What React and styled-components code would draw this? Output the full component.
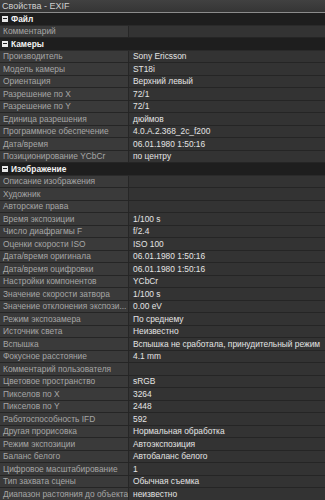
import React from "react";
import styled, { createGlobalStyle } from "styled-components";

const GlobalStyle = createGlobalStyle`
  html, body {
    margin: 0;
    padding: 0;
    background: #2c2c2c;
  }
  body {
    font-family: "Liberation Sans", Arial, sans-serif;
    font-size: 8.4px;
  }
`;

const Panel = styled.div`
  width: 325px;
  height: 500px;
  overflow: hidden;
  background: #2c2c2c;
  display: flex;
  flex-direction: column;
`;

const TitleBar = styled.div`
  height: 13px;
  box-sizing: border-box;
  padding: 0 2px;
  display: flex;
  align-items: center;
  color: #cfcfcf;
  font-size: 9px;
  background: linear-gradient(#414141, #353535);
  border-bottom: 1px solid #8c8c8c;
  flex-shrink: 0;
`;

const Group = styled.div`
  height: 12.5px;
  box-sizing: border-box;
  display: flex;
  align-items: center;
  gap: 3px;
  padding-left: 2px;
  background: #1e1e1e;
  border-bottom: 1px solid #2a2a2a;
  color: #f2f2f2;
  font-weight: bold;
  flex-shrink: 0;
`;

const Toggle = styled.span`
  width: 6px;
  height: 6px;
  background: #e8e8e8;
  display: flex;
  align-items: center;
  justify-content: center;

  &::after {
    content: "";
    width: 4px;
    height: 1px;
    background: #1e1e1e;
  }
`;

const Row = styled.div`
  height: 12.5px;
  box-sizing: border-box;
  display: grid;
  grid-template-columns: 129px 1fr;
  border-bottom: 1px solid #252525;
  flex-shrink: 0;
`;

const Cell = styled.div`
  display: flex;
  align-items: center;
  padding-left: ${(p) => (p.$value ? "4px" : "3px")};
  white-space: nowrap;
  overflow: hidden;
  color: ${(p) => (p.$value ? "#e4e4e4" : "#a6a6a6")};
  background: ${(p) => (p.$value ? "#333333" : "#3a3a3a")};
  border-right: ${(p) => (p.$value ? "none" : "1px solid #262626")};
`;

const sections = [
  { title: "Файл", rows: [["Комментарий", ""]] },
  {
    title: "Камеры",
    rows: [
      ["Производитель", "Sony Ericsson"],
      ["Модель камеры", "ST18i"],
      ["Ориентация", "Верхний левый"],
      ["Разрешение по X", "72/1"],
      ["Разрешение по Y", "72/1"],
      ["Единица разрешения", "дюймов"],
      ["Программное обеспечение", "4.0.A.2.368_2c_f200"],
      ["Дата/время", "06.01.1980 1:50:16"],
      ["Позиционирование YCbCr", "по центру"],
    ],
  },
  {
    title: "Изображение",
    rows: [
      ["Описание изображения", ""],
      ["Художник", ""],
      ["Авторские права", ""],
      ["Время экспозиции", "1/100 s"],
      ["Число диафрагмы F", "f/2.4"],
      ["Оценки скорости ISO", "ISO 100"],
      ["Дата/время оригинала", "06.01.1980 1:50:16"],
      ["Дата/время оцифровки", "06.01.1980 1:50:16"],
      ["Настройки компонентов", "YCbCr"],
      ["Значение скорости затвора", "1/100 s"],
      ["Значение отклонения экспози...", "0.00 eV"],
      ["Режим экспозамера", "По среднему"],
      ["Источник света", "Неизвестно"],
      ["Вспышка", "Вспышка не сработала, принудительный режим"],
      ["Фокусное расстояние", "4.1 mm"],
      ["Комментарий пользователя", ""],
      ["Цветовое пространство", "sRGB"],
      ["Пикселов по X", "3264"],
      ["Пикселов по Y", "2448"],
      ["Работоспособность IFD", "592"],
      ["Другая прорисовка", "Нормальная обработка"],
      ["Режим экспозиции", "Автоэкспозиция"],
      ["Баланс белого", "Автобаланс белого"],
      ["Цифровое масштабирование", "1"],
      ["Тип захвата сцены", "Обычная съемка"],
      ["Диапазон растояния до объекта", "неизвестно"],
    ],
  },
];

export default function App() {
  return (
    <Panel>
      <GlobalStyle />
      <TitleBar>Свойства - EXIF</TitleBar>
      {sections.map((s) => (
        <React.Fragment key={s.title}>
          <Group>
            <Toggle />
            {s.title}
          </Group>
          {s.rows.map(([label, value]) => (
            <Row key={label}>
              <Cell>{label}</Cell>
              <Cell $value>{value}</Cell>
            </Row>
          ))}
        </React.Fragment>
      ))}
    </Panel>
  );
}
